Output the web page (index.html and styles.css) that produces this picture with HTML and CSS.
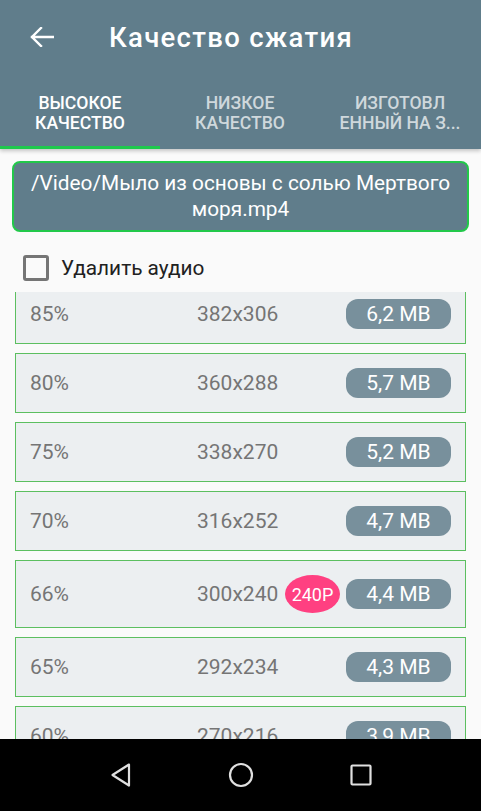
FILE: index.html
```html
<!DOCTYPE html>
<html lang="ru">
<head>
<meta charset="utf-8">
<title>Качество сжатия</title>
<link rel="stylesheet" href="styles.css">
</head>
<body>
<div class="screen">
  <header class="header">
    <div class="appbar">
      <svg class="back" width="24" height="20" viewBox="0 0 24 20" aria-hidden="true">
        <path d="M23 10H2M11 1L2 10l9 9" fill="none" stroke="#fff" stroke-width="2.4" stroke-linecap="square"/>
      </svg>
      <h1 class="title">Качество сжатия</h1>
    </div>
    <nav class="tabs">
      <div class="tab active">ВЫСОКОЕ<br>КАЧЕСТВО</div>
      <div class="tab">НИЗКОЕ<br>КАЧЕСТВО</div>
      <div class="tab">ИЗГОТОВЛ<br>ЕННЫЙ НА З...</div>
    </nav>
  </header>

  <main class="content">
    <div class="file">/Video/Мыло из основы с солью Мертвого моря.mp4</div>
    <label class="check-row">
      <span class="checkbox"></span>
      <span class="check-label">Удалить аудио</span>
    </label>
    <div class="list-viewport">
      <div class="list">
        <div class="item"><span class="pct">85%</span><span class="res"><span>382x306</span></span><span class="size">6,2 MB</span></div>
        <div class="item"><span class="pct">80%</span><span class="res"><span>360x288</span></span><span class="size">5,7 MB</span></div>
        <div class="item"><span class="pct">75%</span><span class="res"><span>338x270</span></span><span class="size">5,2 MB</span></div>
        <div class="item"><span class="pct">70%</span><span class="res"><span>316x252</span></span><span class="size">4,7 MB</span></div>
        <div class="item"><span class="pct">66%</span><span class="res"><span>300x240</span><span class="tag">240P</span></span><span class="size">4,4 MB</span></div>
        <div class="item"><span class="pct">65%</span><span class="res"><span>292x234</span></span><span class="size">4,3 MB</span></div>
        <div class="item"><span class="pct">60%</span><span class="res"><span>270x216</span></span><span class="size">3,9 MB</span></div>
        <div class="item"><span class="pct">55%</span><span class="res"><span>248x198</span></span><span class="size">3,3 MB</span></div>
      </div>
    </div>
  </main>

  <footer class="navbar">
    <svg width="22" height="26" viewBox="0 0 22 26" aria-hidden="true"><path d="M19 2.5L2.5 13 19 23.5z" fill="none" stroke="#e0e0e0" stroke-width="2.2" stroke-linejoin="round"/></svg>
    <svg width="26" height="26" viewBox="0 0 26 26" aria-hidden="true"><circle cx="13" cy="13" r="11" fill="none" stroke="#e0e0e0" stroke-width="2.2"/></svg>
    <svg width="22" height="22" viewBox="0 0 22 22" aria-hidden="true"><rect x="1.5" y="1.5" width="19" height="19" rx="1" fill="none" stroke="#e0e0e0" stroke-width="2.2"/></svg>
  </footer>
</div>
</body>
</html>
```

FILE: styles.css
```css
* { box-sizing: border-box; }
html, body { margin: 0; padding: 0; }
body {
  font-family: Roboto, "Noto Sans", "Liberation Sans", sans-serif;
  background: #fafafa;
}
.screen {
  width: 481px;
  height: 811px;
  display: flex;
  flex-direction: column;
  overflow: hidden;
}
.header {
  background: #607d8b;
  box-shadow: 0 2px 4px rgba(0,0,0,0.22);
  position: relative;
  z-index: 2;
  flex: none;
}
.appbar {
  height: 74px;
  display: flex;
  align-items: center;
  padding-left: 30px;
}
.back { flex: none; margin-top: -1px; }
.title {
  margin: 0 0 0 55px;
  color: #fff;
  font-size: 27.5px;
  font-weight: 500;
  letter-spacing: 1.3px;
}
.tabs {
  height: 75px;
  display: flex;
}
.tab {
  width: 160px;
  padding-top: 19px;
  text-align: center;
  font-size: 17.6px;
  font-weight: 500;
  line-height: 20px;
  color: #cfd8dc;
  border-bottom: 3px solid transparent;
}
.tab.active {
  color: #fff;
  border-bottom-color: #1ec94c;
}
.content {
  flex: 1;
  display: flex;
  flex-direction: column;
  min-height: 0;
}
.file {
  margin: 12px 12px 0;
  min-height: 71px;
  padding: 7px 8px;
  background: #607d8b;
  border: 2px solid #22c84a;
  border-radius: 8px;
  color: #fff;
  font-size: 20.8px;
  line-height: 26px;
  text-align: center;
}
.check-row {
  display: flex;
  align-items: center;
  margin: 22px 0 0 23px;
  height: 27px;
}
.checkbox {
  width: 26px;
  height: 26px;
  border: 3px solid #757575;
  border-radius: 3px;
  flex: none;
}
.check-label {
  margin-left: 12px;
  font-size: 20.8px;
  color: #212121;
}
.list-viewport {
  margin-top: 11px;
  flex: 1;
  min-height: 0;
  overflow: hidden;
  padding: 0 15px;
}
.list {
  margin-top: -8px;
  display: flex;
  flex-direction: column;
  gap: 9px;
}
.item {
  display: grid;
  grid-template-columns: 167px 1fr 105px;
  align-items: center;
  padding: 14px 14px;
  background: #eceff1;
  border: 1px solid #5cbf60;
  font-size: 21px;
  color: #757575;
}
.res {
  display: flex;
  align-items: center;
}
.tag {
  margin-left: auto;
  margin-right: 6px;
  width: 55px;
  height: 38px;
  border-radius: 50%;
  background: #ff4081;
  color: #fff;
  font-size: 18px;
  display: flex;
  align-items: center;
  justify-content: center;
}
.size {
  height: 30px;
  border-radius: 12px;
  background: #78909c;
  color: #fff;
  font-size: 21px;
  line-height: 30px;
  text-align: center;
}
.navbar {
  flex: none;
  height: 72px;
  background: #000;
  display: flex;
  align-items: center;
  justify-content: center;
  gap: 96px;
  position: relative;
  z-index: 2;
}
```
